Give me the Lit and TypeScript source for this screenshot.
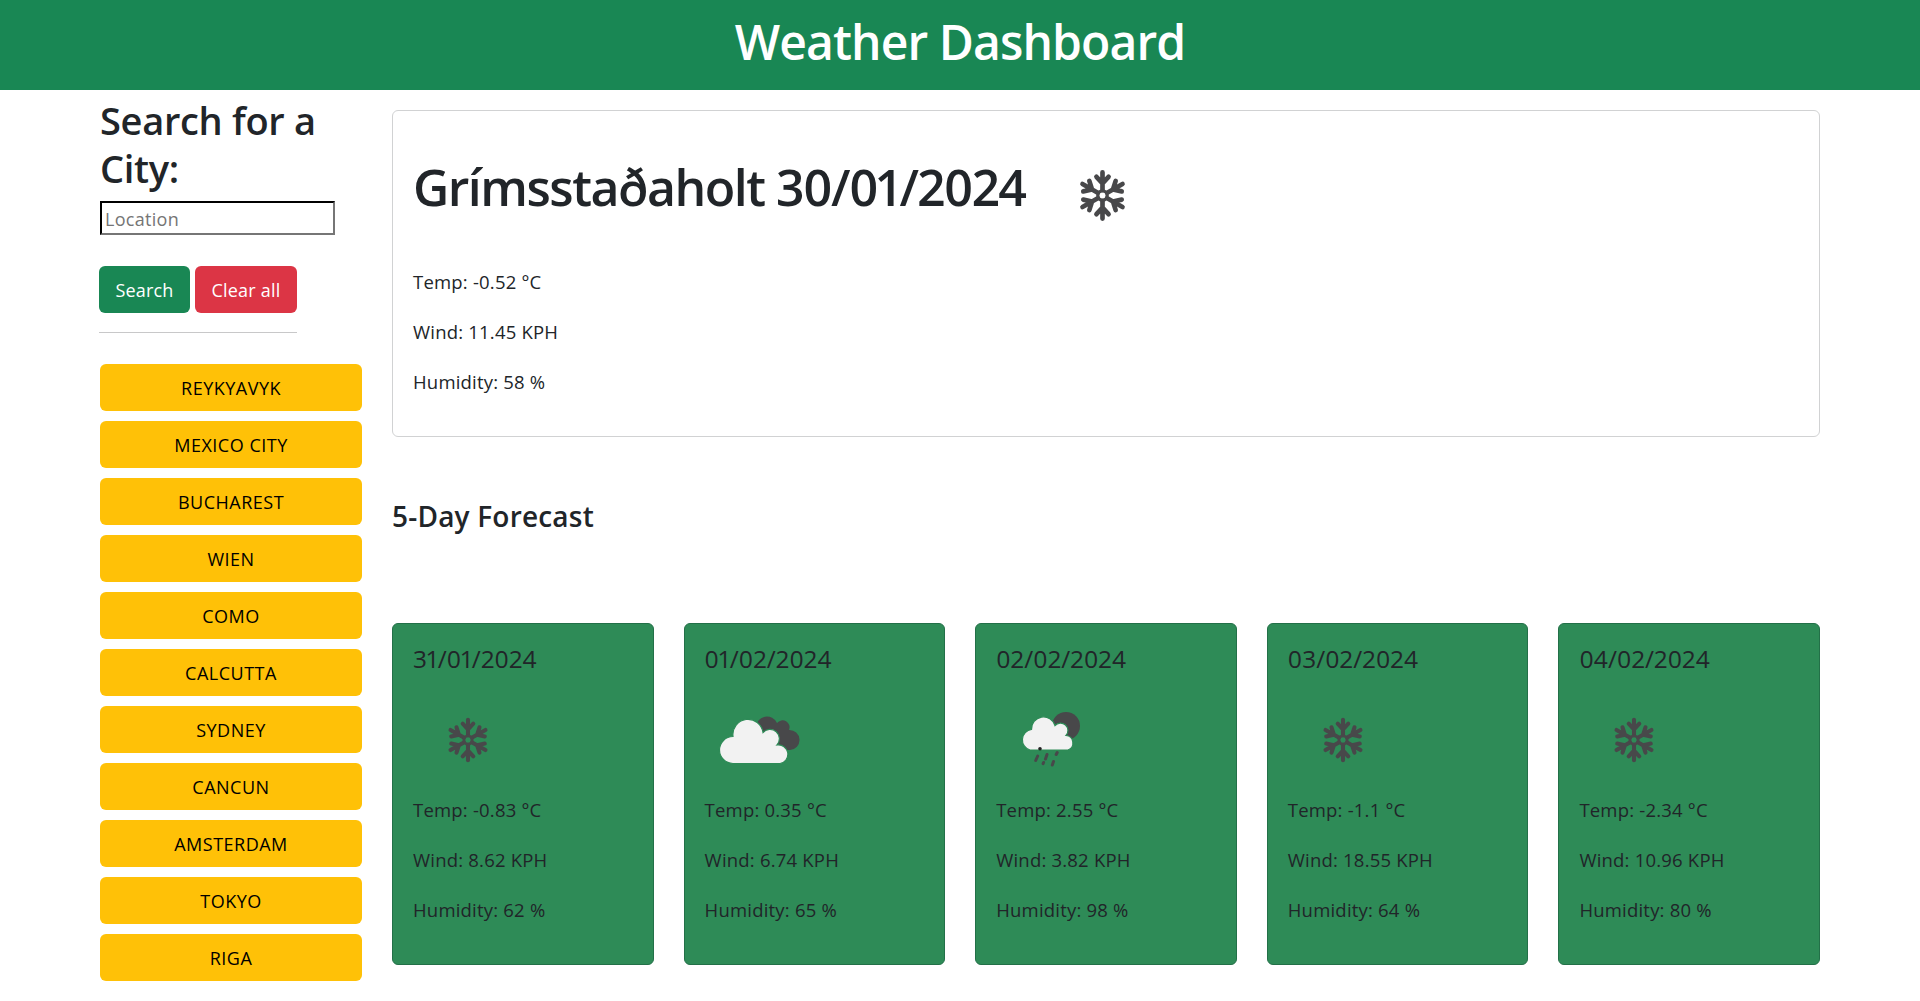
import { LitElement, css, html, svg } from "lit";
import { customElement } from "lit/decorators.js";

const cities = ["REYKYAVYK", "MEXICO CITY", "BUCHAREST", "WIEN", "COMO", "CALCUTTA", "SYDNEY", "CANCUN", "AMSTERDAM", "TOKYO", "RIGA"];

const forecast = [
  { date: "31/01/2024", icon: "snow", temp: "-0.83", wind: "8.62", hum: "62" },
  { date: "01/02/2024", icon: "clouds", temp: "0.35", wind: "6.74", hum: "65" },
  { date: "02/02/2024", icon: "rain", temp: "2.55", wind: "3.82", hum: "98" },
  { date: "03/02/2024", icon: "snow", temp: "-1.1", wind: "18.55", hum: "64" },
  { date: "04/02/2024", icon: "snow", temp: "-2.34", wind: "10.96", hum: "80" },
];

// one arm of the flake, rotated six times round the centre
const arm = svg`<path d="M50 40V8M50 28L39 16M50 28L61 16" />`;

function snowIcon(size: number) {
  return html`<svg width=${size} height=${size} viewBox="0 0 100 100" fill="none" stroke="#48484a" stroke-width="8.5" stroke-linecap="round">
    ${[0, 60, 120, 180, 240, 300].map((a) => svg`<g transform="rotate(${a} 50 50)">${arm}</g>`)}
    <circle cx="50" cy="50" r="8.5" stroke-width="6" />
  </svg>`;
}

const cloudsIcon = html`<svg width="110" height="110" viewBox="0 0 110 110">
  <path fill="#48484a" d="M51 42A11 11 0 0 1 72 38A7 7 0 0 1 84 45A8.7 8.7 0 0 1 85 65H70Z" />
  <path fill="#f2f2f2" stroke="#2e8b57" stroke-width="1.2" d="M28 78.5A13.5 13.5 0 0 1 28 51.5A15 15 0 0 1 58 47.5A8.5 8.5 0 0 1 72 60A9 9 0 0 1 75 78.5Z" />
</svg>`;

const rainIcon = html`<svg width="110" height="110" viewBox="0 0 110 110">
  <circle cx="70" cy="41" r="14" fill="#48484a" />
  <path fill="#f2f2f2" stroke="#2e8b57" stroke-width="1.2" d="M34 65A10.5 10.5 0 0 1 35.5 44.5A12 12 0 0 1 59 40.5A6.5 6.5 0 0 1 70 50.5A7.5 7.5 0 0 1 72 65Z" />
  <circle cx="44" cy="63.7" r="1.8" fill="#222" />
  <path fill="none" stroke="#48484a" stroke-width="3" stroke-linecap="round" d="M41.7 71l-2 4.5M51 69.5l-1.5 4.5M61.2 67.5l-1 2M47.6 77.5l-.5 1.2M57.5 76.5l-1.2 3.5" />
</svg>`;

@customElement("app-root")
export class AppRoot extends LitElement {
  static styles = css`
    :host {
      display: block;
      font-family: "Open Sans", "Noto Sans", sans-serif;
      color: #212529;
    }

    header {
      background: #198754;
      color: #fff;
      height: 90px;
      display: flex;
      align-items: center;
      justify-content: center;
      font-size: 48px;
      font-weight: 600;
      letter-spacing: -0.9px;
      padding-bottom: 8px;
      box-sizing: border-box;
    }

    .page {
      display: flex;
      padding-left: 100px;
      padding-right: 100px;
      gap: 30px;
    }

    .side {
      width: 262px;
      flex: none;
      padding-top: 6px;
    }

    .side h2 {
      font-size: 38px;
      font-weight: 600;
      line-height: 48px;
      letter-spacing: -0.3px;
      margin: 0;
    }

    .location {
      display: block;
      box-sizing: border-box;
      width: 235px;
      height: 34px;
      margin-top: 9px;
      padding: 2px 3px 0;
      border-width: 2px;
      border-style: inset;
      border-color: #212121 #767676 #767676 #212121;
      font: 18px "Open Sans", sans-serif;
      letter-spacing: 0.3px;
      outline: none;
    }

    .location::placeholder {
      color: #757575;
    }

    .actions {
      display: flex;
      gap: 5px;
      margin: 31px 0 0 -1px;
    }

    .btn {
      height: 47px;
      border: none;
      border-radius: 6px;
      padding: 0;
      font: 18px "Open Sans", sans-serif;
      letter-spacing: 0.2px;
      cursor: pointer;
    }

    .search {
      width: 91px;
      background: #198754;
      color: #fff;
    }

    .clear {
      width: 102px;
      background: #dc3545;
      color: #fff;
    }

    hr {
      width: 198px;
      margin: 19px 0 31px -1px;
      border: none;
      border-top: 1px solid #c8c8c9;
    }

    .cities {
      display: flex;
      flex-direction: column;
      gap: 10px;
    }

    .city {
      width: 262px;
      background: #ffc107;
      color: #000;
      letter-spacing: 0.5px;
    }

    .main {
      flex: 1;
      min-width: 0;
      padding-top: 20px;
    }

    .current {
      height: 327px;
      box-sizing: border-box;
      border: 1px solid #d1d2d3;
      border-radius: 6px;
      padding: 20px;
    }

    .title {
      display: flex;
      align-items: center;
      height: 120px;
      font-size: 50px;
      font-weight: 600;
      font-variant-numeric: proportional-nums;
      letter-spacing: -1.5px;
      margin-bottom: 19px;
    }

    .title span {
      line-height: 78px;
      margin-bottom: 8px;
    }

    .title svg {
      margin-left: 49px;
      margin-bottom: -8px;
    }

    p {
      font-size: 18.5px;
      line-height: 24px;
      margin: 0 0 26px;
      letter-spacing: 0.2px;
    }

    h3 {
      font-size: 28px;
      font-weight: 600;
      letter-spacing: 0.2px;
      line-height: 36px;
      margin: 61px 0 89px;
    }

    .cards {
      display: flex;
      gap: 30px;
    }

    .card {
      flex: 1;
      height: 342px;
      box-sizing: border-box;
      background: #2e8b57;
      border: 1px solid #237048;
      border-radius: 6px;
      padding: 20px;
    }

    .date {
      font-size: 24.5px;
      font-variant-numeric: proportional-nums;
      line-height: 30px;
      letter-spacing: 0.1px;
    }

    .icon {
      display: flex;
      align-items: center;
      justify-content: center;
      width: 110px;
      height: 110px;
      margin: 11px 0 2.5px;
    }
  `;

  private renderIcon(name: string) {
    if (name === "clouds") return cloudsIcon;
    if (name === "rain") return rainIcon;
    return snowIcon(48);
  }

  render() {
    return html`
      <header>Weather Dashboard</header>
      <div class="page">
        <aside class="side">
          <h2>Search for a City:</h2>
          <input class="location" placeholder="Location" />
          <div class="actions">
            <button class="btn search">Search</button>
            <button class="btn clear">Clear all</button>
          </div>
          <hr />
          <div class="cities">
            ${cities.map((c) => html`<button class="btn city">${c}</button>`)}
          </div>
        </aside>
        <main class="main">
          <section class="current">
            <div class="title">
              <span>Grímsstaðaholt 30/01/2024</span>
              ${snowIcon(55)}
            </div>
            <p>Temp: -0.52 °C</p>
            <p>Wind: 11.45 KPH</p>
            <p>Humidity: 58 %</p>
          </section>
          <h3>5-Day Forecast</h3>
          <div class="cards">
            ${forecast.map(
              (d) => html`
                <div class="card">
                  <div class="date">${d.date}</div>
                  <div class="icon">${this.renderIcon(d.icon)}</div>
                  <p>Temp: ${d.temp} °C</p>
                  <p>Wind: ${d.wind} KPH</p>
                  <p>Humidity: ${d.hum} %</p>
                </div>
              `
            )}
          </div>
        </main>
      </div>
    `;
  }
}
